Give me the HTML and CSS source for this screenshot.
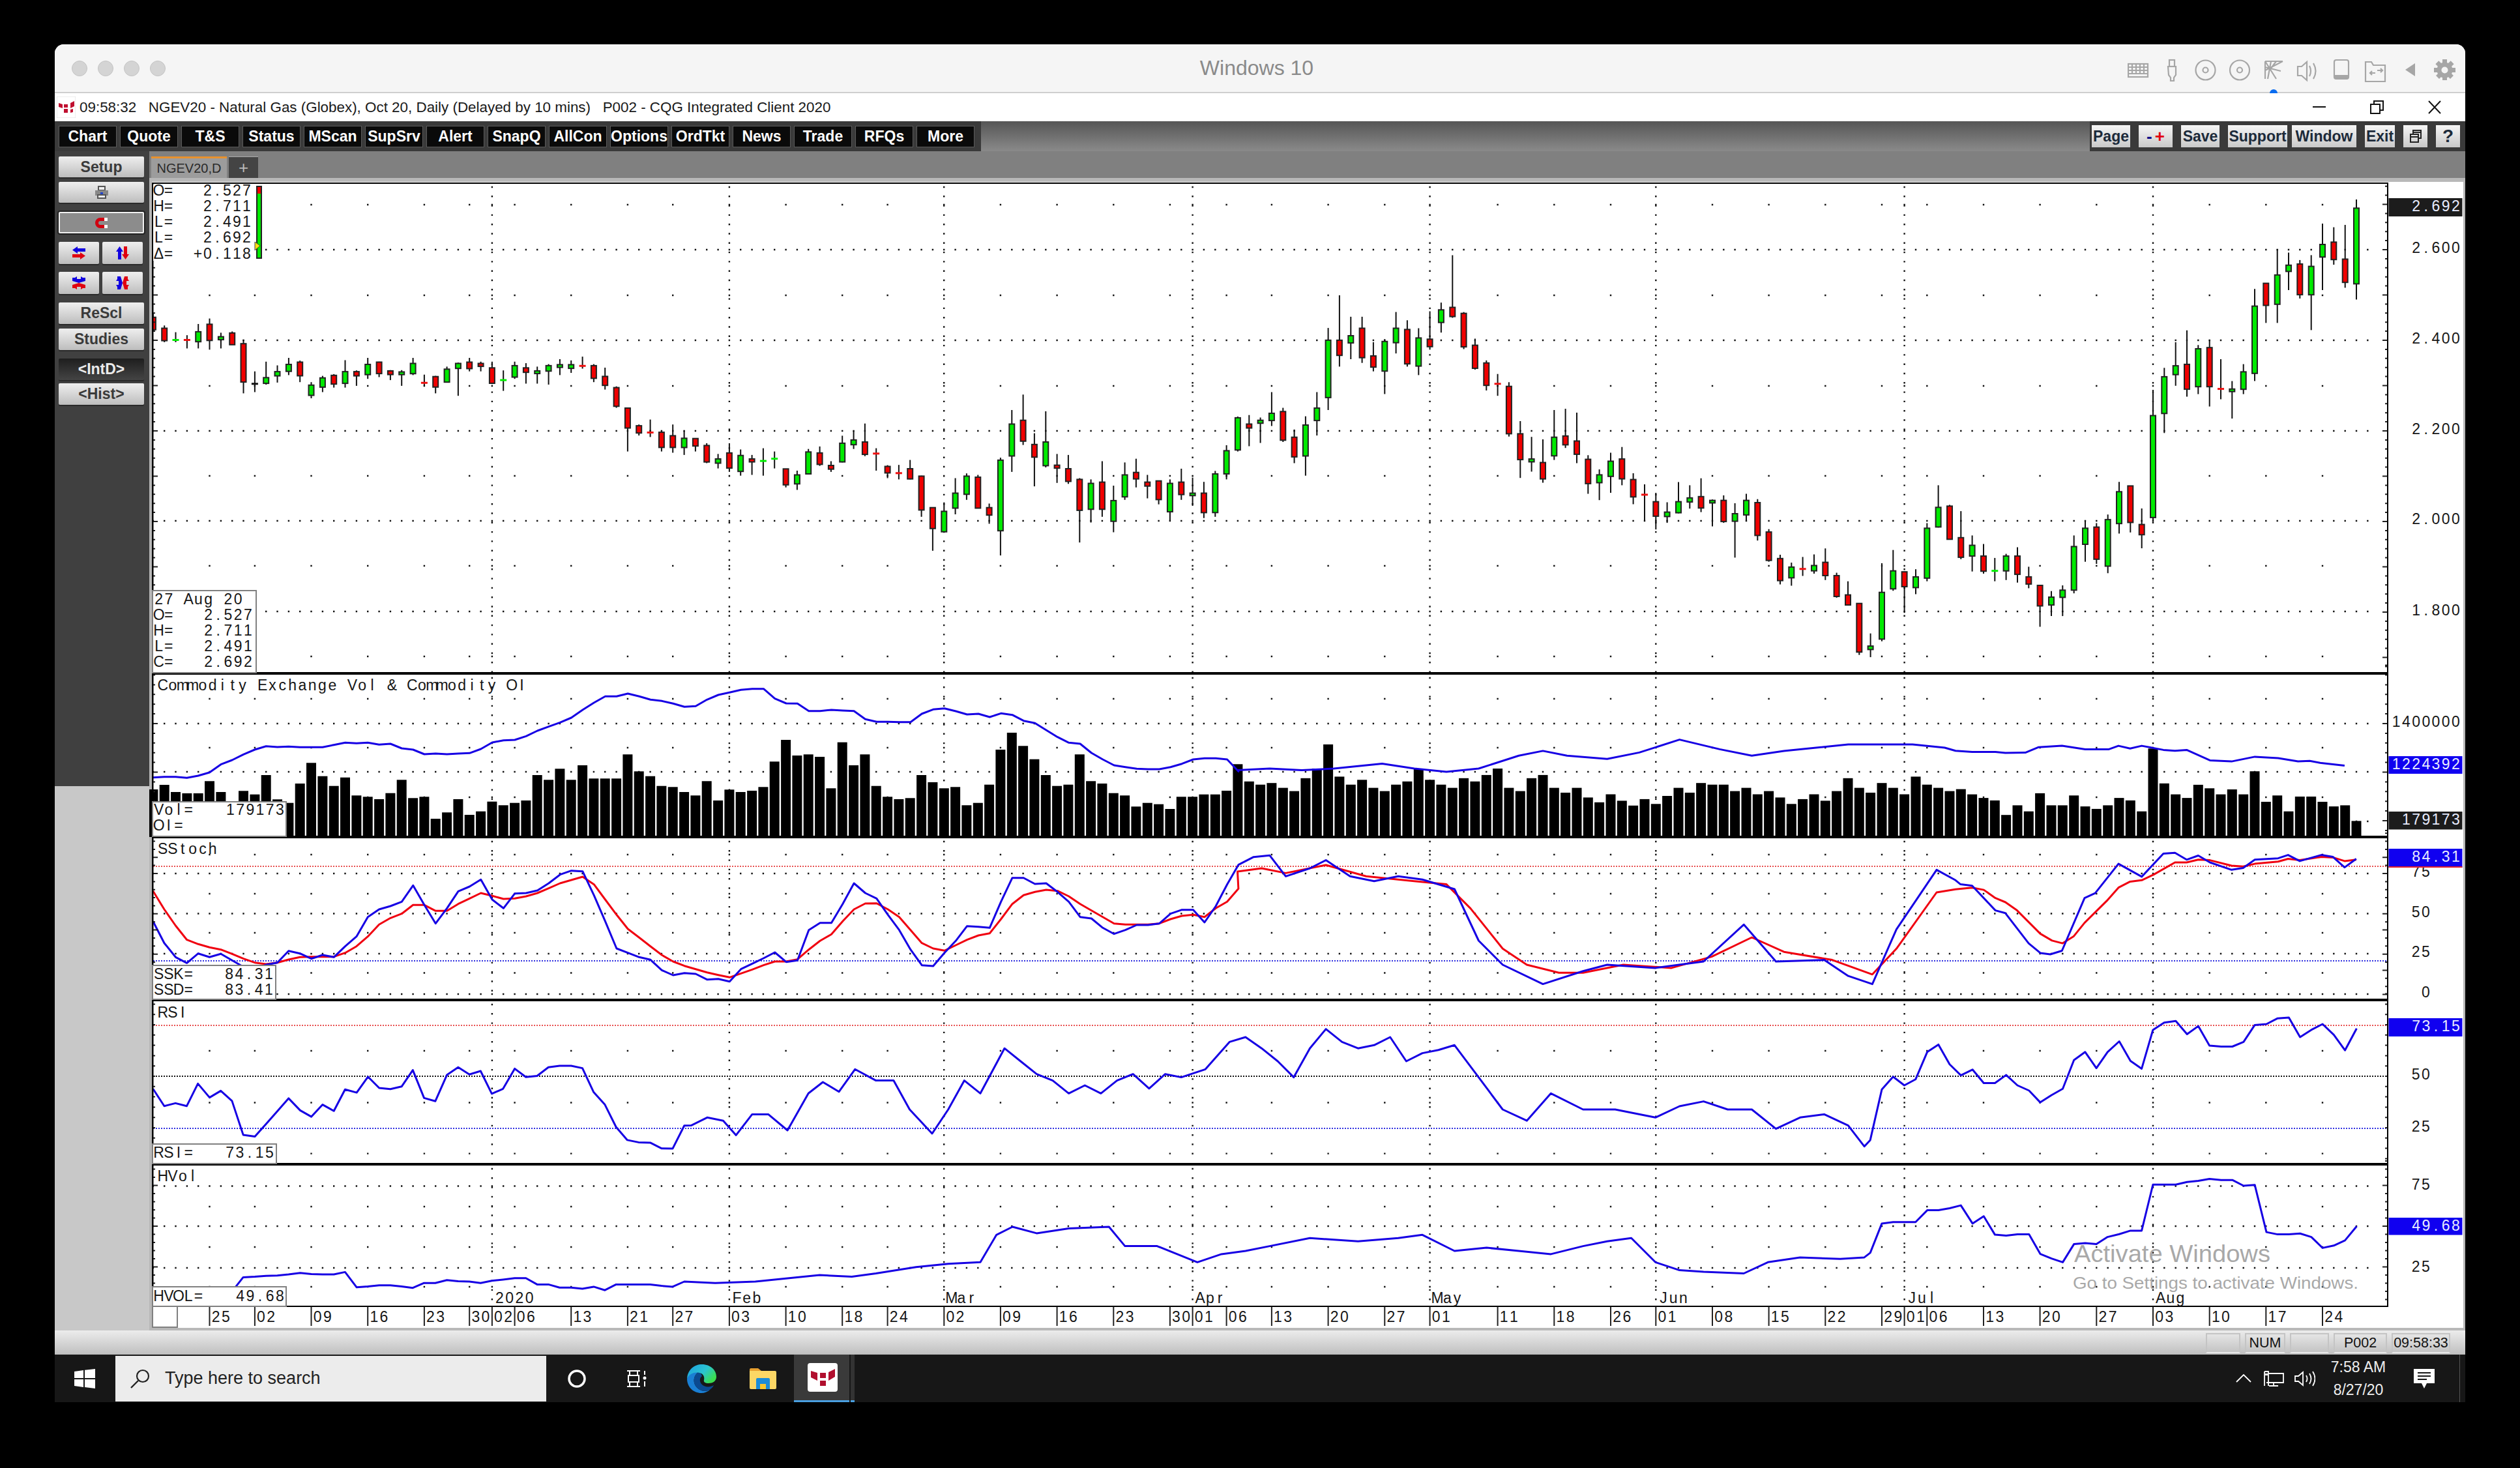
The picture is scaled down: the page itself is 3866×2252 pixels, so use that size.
FILE: index.html
```html
<!DOCTYPE html>
<html lang="en">
<head>
<meta charset="utf-8">
<title>Windows 10 - CQG Integrated Client</title>
<link rel="stylesheet" href="styles.css">
</head>
<body>
<div class="window">
  <header class="titlebar">
    <div class="lights"><span class="light"></span><span class="light"></span><span class="light"></span><span class="light"></span></div>
    <div class="vm-name">Windows 10</div>
    <svg class="vm-icons" viewBox="3264 88 503 55" width="503" height="55">
      <g class="vi">
        <rect x="3265" y="98" width="30" height="20"/>
        <path d="M3265 103h30M3265 108h30M3265 113h30M3271 98v15M3277 98v15M3283 98v15M3289 98v15"/>
        <rect x="3328" y="92" width="8" height="10"/>
        <path d="M3326 102h12v13l-3 4v5h-5v-5l-3-4z"/>
        <circle cx="3383.500" cy="107.500" r="15"/><circle cx="3383.500" cy="107.500" r="4"/>
        <circle cx="3436" cy="107.500" r="15"/><circle cx="3436" cy="107.500" r="4"/>
        <path d="M3475 94v27M3475 94h27M3475 94l17 27M3475 108l27-14M3484 94l-5 27M3475 103l24 6M3492 94l-9 12"/>
        <path d="M3525 102h6l8-7v28l-8-7h-6zM3543 101q4 8 0 16M3549 97q7 12 0 24"/>
        <rect x="3581" y="92" width="22" height="29" rx="3"/>
        <path d="M3629 95h9l3 5h18v25h-30zM3639 115l-3-3 3-3m-3 3h8M3652 105l3 3-3 3m3-3h-8"/>
      </g>
      <rect class="vf" x="3582" y="115" width="20" height="6"/>
      <polygon class="vf" points="3705,97 3705,117 3690,107"/>
      <g class="vf">
        <rect x="3747" y="91" width="7" height="32"/><rect x="3734" y="104" width="33" height="7"/>
        <rect x="3747" y="91" width="7" height="32" transform="rotate(45 3750.500 107.500)"/>
        <rect x="3747" y="91" width="7" height="32" transform="rotate(-45 3750.500 107.500)"/>
      </g>
      <circle class="vg" cx="3750.500" cy="107.500" r="12"/>
      <circle class="vh" cx="3750.500" cy="107.500" r="5"/>
      <circle class="vb" cx="3488" cy="143" r="6"/>
    </svg>
  </header>

  <div class="apptitle">
    <svg class="appicon" viewBox="0 0 29 33" width="29" height="33">
      <rect width="29" height="33" fill="#fff" stroke="#ddd"/>
      <path fill="#c01030" d="M3 10l6 2v6l-6-2zM21 10l6-3v8l-6 3zM11 12h6v5h-6zM11 19h6v6h-6zM21 20l4-1v5l-4 1z"/>
    </svg>
    <span class="apptext">09:58:32   NGEV20 - Natural Gas (Globex), Oct 20, Daily (Delayed by 10 mins)   P002 - CQG Integrated Client 2020</span>
    <svg class="winctl" viewBox="3548 150 197 30" width="197" height="30">
      <path d="M3548 164h20" stroke="#111" stroke-width="2" fill="none"/>
      <path d="M3637 160h14v14h-14zM3642 160v-5h14v14h-5" stroke="#111" stroke-width="2" fill="none"/>
      <path d="M3726 155l18 19M3744 155l-18 19" stroke="#111" stroke-width="2" fill="none"/>
    </svg>
  </div>

  <nav class="toolbar">
    <div class="tbl">
      <span class="tb">Chart</span><span class="tb">Quote</span><span class="tb">T&amp;S</span><span class="tb">Status</span><span class="tb">MScan</span><span class="tb">SupSrv</span><span class="tb">Alert</span><span class="tb">SnapQ</span><span class="tb">AllCon</span><span class="tb">Options</span><span class="tb">OrdTkt</span><span class="tb">News</span><span class="tb">Trade</span><span class="tb">RFQs</span><span class="tb">More</span>
    </div>
    <div class="tbr">
      <span class="rb">Page</span>
      <span class="rb pm"><i class="minus">-</i><i class="plus">+</i></span>
      <span class="rb">Save</span>
      <span class="rb">Support</span>
      <span class="rb win">Window</span>
      <span class="rb">Exit</span>
      <span class="rb"><svg viewBox="0 0 18 20" width="18" height="20"><path d="M1 7h12v12H1zM1 11h12M5 7V1h12v12h-4M5 4h12" fill="none" stroke="#222" stroke-width="2"/></svg></span>
      <span class="rb q">?</span>
    </div>
  </nav>

  <div class="content">
    <aside class="sidebar">
      <span class="sb h32">Setup</span>
      <span class="sb g7 h32">
        <svg viewBox="0 0 22 20" width="22" height="20"><path d="M6 1h10v6H6z" fill="#eee" stroke="#555" stroke-width="2"/><rect x="1" y="7" width="20" height="8" fill="#888"/><rect x="5" y="14" width="12" height="5" fill="#eee" stroke="#555" stroke-width="2"/><rect x="9" y="10" width="4" height="3" fill="#2244cc"/></svg>
      </span>
      <span class="sb sunk g14">
        <svg viewBox="0 0 22 20" width="22" height="20"><path d="M20 2H9a8 8 0 0 0 0 16h11v-5H9a3 3 0 0 1 0-6h11z" fill="#d00010"/><rect x="15" y="2" width="5" height="5" fill="#fff"/><rect x="15" y="13" width="5" height="5" fill="#fff"/></svg>
      </span>
      <div class="sbrow g13">
        <span class="sb small"><svg viewBox="0 0 22 22" width="22" height="22"><path d="M9 1v3h12v5H9v3L1 6.500z" fill="#1000e0"/><path d="M13 10v3H1v5h12v3l8-5.500z" fill="#e00010"/></svg></span>
        <span class="sb small"><svg viewBox="0 0 22 22" width="22" height="22"><path d="M1 9h3v12h5V9h3L6.500 1z" fill="#1000e0"/><path d="M10 13h3V1h5v12h3l-5.500 8z" fill="#e00010"/></svg></span>
      </div>
      <div class="sbrow g12">
        <span class="sb small"><svg viewBox="0 0 22 22" width="22" height="22"><path d="M1 3h4l3-2v4h6V1l3 2h4v5l-10 3L1 8z" fill="#1000e0"/><path d="M1 19h4l3 2v-4h6v4l3-2h4v-5l-10-3L1 14z" fill="#e00010"/></svg></span>
        <span class="sb small"><svg viewBox="0 0 22 22" width="22" height="22"><path d="M3 1v4L1 8h4v6H1l2 3v4h5l3-10L8 1z" fill="#1000e0"/><path d="M19 1v4l2 3h-4v6h4l-2 3v4h-5l-3-10 3-10z" fill="#e00010"/></svg></span>
      </div>
      <span class="sb g13">ReScl</span>
      <span class="sb g7">Studies</span>
      <span class="sb on g13">&lt;IntD&gt;</span>
      <span class="sb g5">&lt;Hist&gt;</span>
    </aside>

    <section class="main">
      <div class="tabs">
        <span class="tab">NGEV20,D</span>
        <span class="tabplus">+</span>
      </div>
      <svg id="chart" class="chart" viewBox="229 273 3553 1768" width="3553" height="1768" role="img" aria-label="NGEV20 daily candlestick chart"></svg>
    </section>
  </div>

  <footer class="statusbar">
    <div class="cells">
      <span class="cell"></span><span class="cell">NUM</span><span class="cell"></span><span class="cell">P002</span><span class="cell">09:58:33</span>
    </div>
  </footer>

  <div class="taskbar">
    <svg class="t-win" viewBox="0 0 32 30" width="32" height="30"><path fill="#fff" d="M0 4l14-2v12H0zM16 1.700L32 0v14H16zM0 16h14v12L0 26zM16 16h16v14l-16-2z"/></svg>
    <div class="search">
      <svg viewBox="0 0 32 30" width="32" height="30"><circle cx="20" cy="11" r="9" fill="none" stroke="#222" stroke-width="2.200"/><path d="M13 18L2 29" stroke="#222" stroke-width="2.400"/></svg>
      <span>Type here to search</span>
    </div>
    <svg class="t-cort" viewBox="0 0 28 28" width="28" height="28"><circle cx="14" cy="14" r="12" fill="none" stroke="#fff" stroke-width="3.500"/></svg>
    <svg class="t-view" viewBox="0 0 30 28" width="30" height="28"><path d="M0 2h20M0 26h20M2 9h16v10H2zM4 9V2M16 9V2M4 19v7M16 19v7" stroke="#fff" stroke-width="2" fill="none"/><circle cx="27" cy="13" r="2.500" fill="#fff"/><path d="M27 2v6M27 18v8" stroke="#fff" stroke-width="2"/></svg>
    <svg class="t-edge" viewBox="0 0 46 44" width="46" height="44">
      <defs><linearGradient id="eg" x1="0" y1="0" x2="1" y2="0.600"><stop offset="0" stop-color="#1b9de2"/><stop offset="0.600" stop-color="#2bc4d0"/><stop offset="1" stop-color="#3bde4e"/></linearGradient></defs>
      <path fill="#1a7fd4" d="M1 22C4 14 12 11 18 12c-6 5-8 12-5 19 4 9 16 13 24 7-4 4-9 6-14 6C10 44 1 34 1 22z"/>
      <path fill="#0b4a91" d="M18 12c-6 5-8 12-5 19 4 9 16 13 24 7 3-2 4-4 5-6-6 4-15 3-19-2-3-4-3-9 1-12-1-4-3-6-6-6z"/>
      <path fill="url(#eg)" d="M1 22C2 8 12 0 24 0c13 0 22 9 22 19 0 7-6 10-12 10-5 0-8-2-7-5 1-3 0-10-7-11C10 11 4 16 1 22z"/>
    </svg>
    <svg class="t-folder" viewBox="0 0 41 32" width="41" height="32">
      <path fill="#e8a030" d="M0 2q0-2 2-2h11l5 4h-18z"/>
      <path fill="#fcd765" d="M0 4h39q2 0 2 2v24q0 2-2 2H2q-2 0-2-2z"/>
      <path fill="#1a8cd8" d="M10 32V17q0-2 2-2h17q2 0 2 2v15h-6v-8H16v8z"/>
      <rect x="16" y="24" width="9" height="8" fill="#f7c830"/>
    </svg>
    <div class="t-active">
      <svg viewBox="0 0 46 44" width="46" height="44"><rect width="46" height="44" rx="4" fill="#fff"/><path fill="#b10f2e" d="M5 12l10 3v12l-10-5zM32 14l10-5v12l-10 6zM19 15h9v8h-9zM19 27h9v8h-9z"/></svg>
    </div>
    <span class="t-sliver"></span>
    <div class="tray">
      <svg viewBox="0 0 24 13" width="24" height="13"><path d="M1 12L12 1l11 11" fill="none" stroke="#fff" stroke-width="1.800"/></svg>
      <svg class="tr-net" viewBox="0 0 31 24" width="31" height="24"><path d="M7 4h23v14H4M15 18v5M8 23h14M1 1h6v22M1 1v22" fill="none" stroke="#fff" stroke-width="1.800"/><rect x="2" y="4" width="4" height="3" fill="#fff"/></svg>
      <svg class="tr-vol" viewBox="0 0 32 24" width="32" height="24"><path d="M1 8h5l7-6v20l-7-6H1zM18 7q3 5 0 10M23 4q5 8 0 16M28 1q7 11 0 22" fill="none" stroke="#fff" stroke-width="1.800"/></svg>
      <div class="clock"><span>7:58 AM</span><span>8/27/20</span></div>
      <svg class="tr-act" viewBox="0 0 32 30" width="32" height="30"><path fill="#fff" d="M0 0h32v22H20l-4 8-4-8H0z"/><path d="M6 6h20M6 11h20M6 16h14" stroke="#171717" stroke-width="2"/></svg>
    </div>
  </div>
</div>
<script src="chart.js"></script>
</body>
</html>
```

FILE: styles.css
```css
* { box-sizing: border-box; }
html, body { margin: 0; height: 2252px; background: #000; overflow: hidden; }
body { font-family: "Liberation Sans", Arial, sans-serif; }

.window { margin: 68px 0 0 84px; width: 3698px; height: 2083px; display: flex; flex-direction: column; border-radius: 14px 14px 0 0; overflow: hidden; background: #fff; }

.titlebar { height: 75px; flex: none; background: #f5f5f5; border-bottom: 2px solid #cfcfcf; display: grid; grid-template-columns: 1fr auto 1fr; }
.lights { display: flex; gap: 16px; padding: 25px 0 0 26px; }
.light { width: 24px; height: 24px; border-radius: 50%; background: #d4d4d4; border: 1px solid #c4c4c4; }
.vm-name { font-size: 32px; color: #8a8a8a; padding-top: 18px; margin-right: 10px; }
.vm-icons { justify-self: end; margin: 20px 15px 0 0; display: block; }
.vi { fill: none; stroke: #a6a6a6; stroke-width: 2.2; }
.vf { fill: #a6a6a6; }
.vg { fill: #a6a6a6; }
.vh { fill: #f5f5f5; }
.vb { fill: #0a6cf0; }

.apptitle { height: 43px; flex: none; display: flex; align-items: center; background: #fff; padding-left: 3px; }
.appicon { flex: none; }
.apptext { font-size: 22.4px; white-space: pre; color: #1a1a1a; margin-left: 6px; }
.winctl { margin-left: auto; margin-right: 37px; flex: none; }

.toolbar { height: 46px; flex: none; display: flex; justify-content: space-between; background: linear-gradient(#565656, #8a8a8a); }
.tbl { display: flex; gap: 5px; padding: 7px 6px 0; background: #3a3a3a; width: 1421px; }
.tb { width: 89px; height: 33px; background: #0a0a0a; border: 1px solid #5a5a5a; color: #fff; font-weight: 700; font-size: 23px; display: flex; align-items: center; justify-content: center; }
.tbr { display: grid; grid-template-columns: 59px 52px 59px 91px 93px 46px 37px 37px; column-gap: 13px; padding: 6px 8px 0 0; background: #3a3a3a; width: 576px; justify-content: end; }
.rb { height: 34px; background: linear-gradient(#f6f6f6, #c9c9c9); color: #1c2a3a; font-weight: 700; font-size: 23px; display: flex; align-items: center; justify-content: center; overflow: hidden; white-space: nowrap; }
.rb.win { margin-left: -6px; }
.rb.q { font-size: 28px; }
.pm i { font-style: normal; font-weight: 900; font-size: 26px; padding: 0 2px; }
.minus { color: #10108a; }
.plus { color: #e00010; }

.content { flex: 1; min-height: 0; display: flex; }
.sidebar { width: 145px; flex: none; padding: 8px 0 0 6px; display: flex; flex-direction: column; background: linear-gradient(#404040 0, #404040 974px, #c8c8c8 974px); }
.sb { width: 131px; height: 33px; flex: none; background: linear-gradient(#efefef, #bdbdbd); box-shadow: 0 2px 0 #2a2a2a; color: #3a3a3a; font-weight: 700; font-size: 23px; display: flex; align-items: center; justify-content: center; border-radius: 2px; }
.h32 { height: 32px; }
.sunk { height: 33px; background: #8c8c8c; border: 2px solid #f0f0f0; box-shadow: 0 0 0 2px #222; }
.on { background: linear-gradient(#1e1e1e, #444); color: #eaeaea; }
.small { width: 62px; height: 34px; }
.sbrow { display: flex; gap: 5px; flex: none; }
.g5 { margin-top: 5px; }
.g7 { margin-top: 7px; }
.g12 { margin-top: 12px; }
.g13 { margin-top: 13px; }
.g14 { margin-top: 14px; }

.main { flex: 1; min-width: 0; display: flex; flex-direction: column; }
.tabs { height: 41px; flex: none; background: #808080; display: flex; align-items: flex-end; gap: 3px; padding-left: 3px; }
.tab { width: 116px; height: 33px; background: #9c9c9c; border-top: 3px solid #e8922e; color: #2a2a2a; font-size: 20px; display: flex; align-items: center; justify-content: center; }
.tabplus { width: 45px; height: 33px; background: #444; border-top: 1px solid #aaa; color: #bbb; font-size: 26px; display: flex; align-items: center; justify-content: center; }
.chart { display: block; background: #b8b8b8; }

.statusbar { height: 37px; flex: none; background: linear-gradient(#ececec, #bfbfbf); display: flex; justify-content: flex-end; padding: 4px 23px 0 0; }
.cells { display: grid; grid-template-columns: 53px 62px 60px 82px 90px; column-gap: 7px; }
.cell { height: 31px; border: 2px solid #c4c4c4; border-bottom-color: #e8e8e8; font-size: 21.5px; color: #111; display: flex; align-items: center; justify-content: center; white-space: nowrap; overflow: hidden; }

.taskbar { height: 73px; flex: none; background: #171717; display: flex; align-items: center; color: #fff; }
.t-win { margin-left: 30px; flex: none; }
.search { margin-left: 31px; width: 661px; height: 70px; background: #ececec; color: #222; display: flex; align-items: center; font-size: 27px; padding-left: 22px; gap: 22px; flex: none; }
.t-cort { margin-left: 33px; flex: none; }
.t-view { margin-left: 63px; flex: none; }
.t-edge { margin-left: 61px; flex: none; }
.t-folder { margin-left: 51px; flex: none; }
.t-active { margin-left: 27px; width: 85px; height: 73px; background: #3a3a3a; border-bottom: 3px solid #4a9fe0; display: flex; align-items: center; justify-content: center; flex: none; padding-left: 2px; }
.t-sliver { margin-left: 2px; width: 6px; height: 73px; background: #333; border-bottom: 3px solid #4a9fe0; flex: none; }
.tray { margin-left: auto; display: flex; align-items: center; height: 73px; padding-right: 38px; border-right: 1px solid #555; margin-right: 8px; }
.tr-net { margin-left: 19px; }
.tr-vol { margin-left: 16px; }
.clock { margin-left: 24px; width: 84px; display: flex; flex-direction: column; align-items: center; font-size: 23px; line-height: 35px; white-space: nowrap; color: #eee; }
.tr-act { margin-left: 43px; }

/* chart */
.t { font: 23px "Liberation Sans", Arial, sans-serif; fill: #161616; white-space: pre; text-anchor: middle; }
.t.chip { fill: #e8ecff; }
.wm1 { font: 36px "Liberation Sans", Arial, sans-serif; fill: #9a9a9a; opacity: .85; }
.wm2 { font: 25px "Liberation Sans", Arial, sans-serif; fill: #9a9a9a; opacity: .85; }
.plotbg { fill: #fff; }
.dots { fill: #111; }
.box { fill: #fff; stroke: #808080; stroke-width: 2; }
.sep { fill: #000; }
.line { fill: none; stroke-width: 3; stroke-linejoin: round; }
.blue { stroke: #1600e4; }
.red { stroke: #f00010; }
.wick { stroke: #111; stroke-width: 2; }
.body { stroke: #222; stroke-width: 2; }
.gfill { fill: #00ea00; }
.rfill { fill: #f00000; }
.kfill { fill: #111; }
.bgfill { fill: #00f000; }
.brfill { fill: #f01010; }
.vbar { fill: #000; }
.hl { fill: none; stroke-width: 2; stroke-dasharray: 2 2; }
.hl-r { stroke: #e85050; }
.hl-b { stroke: #3030e0; }
.hl-k { stroke: #111; }
.chipk { fill: #1c1c1c; }
.chipb { fill: #1000f0; }
.chipr { fill: #e02030; }
.marker { fill: #ffe010; stroke: #444; stroke-width: 1; }
```

FILE: chart.js
```js
(function () {
  var X0 = 3615, DX = 17.334;
  var L = 234, R = 3663, T = 281;
  function bx(k) { return X0 - k * DX; }
  function kOf(px) { return Math.round((X0 - px) / DX); }

  /* candles: zoomX colour hi top bottom lo — read from crops of the source */
  var segA = "8 r 525 540 590 595;35 r 573 584 634 640;62 G 600 627 635 640;89 R 612 627 635 665;117 g 567 598 638 665;144 r 545 568 633 670;171 g 602 618 630 665;198 r 597 603 650 650;225 r 630 646 800 845;252 K 757 805 809 840;280 g 718 782 805 810;307 g 733 758 775 802;334 g 703 729 757 772;361 r 714 720 775 800;388 g 800 812 853 865;415 g 775 783 820 840;443 r 768 773 808 822;470 g 712 758 805 822;497 r 753 758 775 815;524 g 703 729 770 787;552 r 718 720 766 780;579 r 752 755 770 792;606 g 752 759 770 815;633 g 703 725 766 772;660 R 770 800 806 815;688 r 775 778 820 845;715 g 738 748 800 800;742 g 722 725 745 855;769 r 703 720 746 757;796 r 718 725 737 757;823 r 718 743 805 808;850 G 753 788 796 835;878 g 718 734 780 787;905 r 724 743 761 806;932 g 738 755 766 806;959 g 728 734 756 810;986 g 708 730 741 772;1014 g 713 730 745 763;1041 R 698 733 737 746;1068 r 728 734 785 800;1095 r 742 777 813 830;1122 r 817 822 897 903;1149 r 903 904 984 1078;1176 r 970 975 1004 1014;1204 R 950 1000 1004 1020;1231 r 998 1001 1062 1078;1258 r 970 1015 1062 1083;1285 g 995 1025 1062 1092;1312 r 1025 1026 1056 1078;1340 r 1045 1054 1120 1125;1367 g 1088 1108 1125 1146;1394 r 1045 1084 1145 1160;1421 g 1070 1094 1158 1175;1448 r 1092 1108 1120 1172;1475 G 1065 1112 1120 1175;1503 G 1078 1103 1111 1146;1530 r 1147 1148 1212 1222;1557 g 1155 1172 1208 1232";
  var segB = "63 g 1068 1080 1168 1170;90 r 1058 1084 1130 1136;117 r 1117 1134 1149 1160;145 g 1015 1045 1120 1122;172 g 996 1032 1051 1068;199 r 966 1040 1090 1097;226 R 1065 1083 1090 1155;254 r 1133 1138 1164 1185;281 R 1132 1160 1170 1190;308 r 1112 1147 1188 1190;335 r 1175 1177 1313 1340;362 r 1302 1303 1387 1476;390 g 1282 1318 1400 1402;417 g 1185 1245 1305 1330;444 g 1166 1177 1250 1272;471 r 1172 1181 1305 1306;498 r 1287 1303 1333 1368;525 g 1103 1113 1396 1495;553 g 912 968 1096 1160;580 r 850 953 1037 1052;607 r 1005 1050 1101 1218;634 g 917 1040 1135 1142;661 r 1088 1133 1145 1204;688 r 1092 1147 1198 1208;716 r 1185 1190 1314 1443;743 g 1190 1206 1310 1363;770 r 1117 1201 1310 1340;797 g 1215 1275 1358 1402;825 g 1122 1172 1260 1272;852 r 1107 1162 1188 1222;879 r 1172 1201 1217 1266;906 r 1195 1196 1271 1290;933 g 1190 1206 1320 1358;960 r 1147 1201 1251 1272;988 g 1183 1245 1255 1296;1015 r 1200 1245 1323 1345;1042 g 1156 1168 1323 1340;1069 g 1053 1075 1168 1190;1096 g 938 943 1072 1078;1124 r 932 968 984 1057;1151 g 942 953 965 1044;1178 g 840 925 954 976;1205 r 903 918 1033 1040;1232 r 990 1021 1100 1125;1259 g 937 972 1096 1175;1287 g 840 904 954 1014;1314 g 583 632 862 912;1341 r 452 632 693 738;1368 g 538 614 643 708;1395 r 538 584 702 723;1423 r 640 695 740 757;1450 g 628 637 756 848;1477 g 519 584 642 685;1504 r 552 589 727 738;1531 g 584 623 736 772;1558 r 516 628 658 670";
  var segC = "17 g 380 403 443 475;45 r 230 395 424 428;72 r 410 414 520 527;99 r 494 515 588 592;126 r 563 571 642 658;153 R 606 635 639 675;181 r 632 645 795 804;208 r 755 795 877 935;235 g 805 875 884 915;262 r 813 886 938 950;290 g 720 806 865 878;317 r 716 802 830 840;344 r 728 818 860 888;371 r 863 876 953 985;398 g 908 925 950 1005;425 g 855 882 930 982;452 r 837 875 938 958;480 r 920 940 995 1018;507 R 955 985 991 1073;534 r 982 1010 1056 1098;561 g 1012 1043 1057 1077;588 g 948 1010 1045 1047;615 g 958 998 1011 1032;643 r 936 994 1030 1043;670 g 1003 1006 1014 1088;697 r 990 1006 1073 1077;724 g 1015 1048 1072 1187;751 g 985 1006 1052 1073;778 r 1002 1013 1117 1133;806 r 1097 1106 1196 1200;833 r 1178 1190 1260 1272;860 g 1203 1217 1251 1276;887 R 1185 1220 1226 1245;914 g 1177 1212 1229 1238;942 r 1158 1202 1244 1258;969 r 1235 1244 1310 1314;996 r 1262 1305 1337 1338;1023 r 1331 1332 1486 1495;1050 g 1427 1467 1478 1502;1078 g 1205 1297 1445 1452;1105 g 1163 1229 1286 1292;1132 r 1231 1232 1279 1362;1159 g 1224 1248 1282 1303;1186 g 1078 1094 1252 1262;1213 g 958 1028 1090 1092;1241 r 1020 1024 1129 1130;1268 r 1040 1124 1186 1192;1295 g 1117 1148 1182 1231;1322 r 1144 1182 1230 1238;1349 G 1188 1227 1231 1262;1377 g 1175 1182 1229 1258;1404 r 1154 1182 1240 1266;1431 r 1216 1248 1271 1284;1458 r 1274 1275 1340 1406;1485 g 1293 1312 1337 1372;1512 g 1275 1290 1313 1372;1540 g 1117 1152 1290 1300;1567 g 1070 1094 1145 1200";
  var segD = "110 r 1435 1452 1590 1610;162 g 1398 1420 1620 1650;214 g 1258 1300 1437 1480;266 r 1275 1275 1432 1475;318 r 1372 1441 1485 1543;370 g 862 973 1411 1427;422 g 768 806 964 1048;474 g 658 759 797 845;526 r 607 753 860 892;578 g 670 686 849 881;630 r 648 681 849 934;682 R 731 856 861 903;734 g 825 859 870 986;786 g 752 785 860 881;838 g 429 503 792 825;890 r 405 405 500 575;942 g 258 369 495 575;994 g 273 327 354 434;1046 r 305 322 454 470;1098 g 284 332 454 606;1150 g 148 238 292 434;1202 r 164 228 303 325;1254 r 154 301 401 424;1306 g 45 82 407 475";

  var out = [];
  function rect(x, y, w, h, c) { out.push('<rect class="' + c + '" x="' + x.toFixed(1) + '" y="' + y.toFixed(1) + '" width="' + w.toFixed(1) + '" height="' + h.toFixed(1) + '"/>'); }

  /* text drawn glyph by glyph in fixed cells, like the terminal's chart font */
  function cells(str, x, y, cls, cell) {
    cell = cell || 15.2;
    var xs = [];
    for (var i = 0; i < str.length; i++) xs.push((x + cell * (i + 0.5)).toFixed(1));
    var s = str.replace(/&/g, '&amp;');
    out.push('<text class="t' + (cls ? ' ' + cls : '') + '" x="' + xs.join(' ') + '" y="' + y + '">' + s + '</text>');
  }
  function cellsR(str, xEnd, y, cls, cell) { cells(str, xEnd - str.length * (cell || 15.2), y, cls, cell); }

  /* ---- background ---- */
  rect(233, 279, 3546, 1758, 'plotbg');

  var DATES = [[190,'25'],[186,'02'],[181,'09'],[176,'16'],[171,'23'],[167,'30'],[165,'02'],[163,'06'],[158,'13'],[153,'21'],[149,'27'],[144,'03'],[139,'10'],[134,'18'],[130,'24'],[125,'02'],[120,'09'],[115,'16'],[110,'23'],[105,'30'],[103,'01'],[100,'06'],[96,'13'],[91,'20'],[86,'27'],[82,'01'],[76,'11'],[71,'18'],[66,'26'],[62,'01'],[57,'08'],[52,'15'],[47,'22'],[42,'29'],[40,'01'],[38,'06'],[33,'13'],[28,'20'],[23,'27'],[18,'03'],[13,'10'],[8,'17'],[3,'24']];
  var MONTHS = [[165,'2020'],[144,'Feb'],[125,'Mar'],[103,'Apr'],[82,'May'],[62,'Jun'],[40,'Jul'],[18,'Aug']];
  var PANES = [
    { top: 282, bot: 1031, dense: [383, 522, 661, 799, 938], sparse: [314, 453, 592, 730, 868, 1007], sub: 13.9, ref: 383 },
    { top: 1035, bot: 1282, dense: [1110, 1184, 1260], sparse: [1072, 1147, 1223], sub: 14.9, ref: 1110 },
    { top: 1286, bot: 1532, dense: [1340, 1401.5, 1463, 1525], sparse: [1311, 1371, 1431, 1492.5], sub: 12.37, ref: 1340 },
    { top: 1536, bot: 1784, dense: [], sparse: [1612, 1691.5, 1769.6], sub: 15.8, ref: 1651 },
    { top: 1788, bot: 2003, dense: [1819.5, 1881, 1945], sparse: [1851, 1913, 1974], sub: 12.5, ref: 1881 }
  ];

  /* ---- grid dots ---- */
  var d = '';
  function dot(x, y) { d += 'M' + x.toFixed(1) + ' ' + (y - 1.2).toFixed(1) + 'h2.4v2.4h-2.4z'; }
  PANES.forEach(function (p) {
    var k, y;
    p.dense.forEach(function (y) { for (k = 195; k >= -1; k--) dot(bx(k) - 1.2, y); });
    p.sparse.forEach(function (y) { DATES.forEach(function (dt) { dot(bx(dt[0]) - 1.2, y); }); });
    MONTHS.forEach(function (m) {
      for (y = p.top + 5; y < p.bot; y += 14.3) dot(bx(m[0]) - 1.2, y);
    });
  });
  out.push('<path class="dots" d="' + d + '"/>');

  /* ---- threshold lines ---- */
  [[1329, 'hl-r'], [1474, 'hl-b'], [1573, 'hl-r'], [1651, 'hl-k'], [1731, 'hl-b']].forEach(function (h) {
    out.push('<path class="hl ' + h[1] + '" d="M235 ' + h[0] + 'H3663"/>');
  });

  /* ---- candles ---- */
  out.push('<clipPath id="plotclip"><rect x="' + L + '" y="' + T + '" width="' + (R - L) + '" height="750"/></clipPath><g clip-path="url(#plotclip)">');
  function candles(seg, fx, fy) {
    seg.split(';').forEach(function (row) {
      var c = row.split(' ');
      var x = bx(kOf(fx(+c[0]))), col = c[1];
      var hi = fy(+c[2]), top = fy(+c[3]), bot = fy(+c[4]), lo = fy(+c[5]);
      out.push('<path class="wick" d="M' + x.toFixed(1) + ' ' + hi.toFixed(1) + 'V' + lo.toFixed(1) + '"/>');
      if (col === col.toUpperCase()) {
        rect(x - 5, (top + bot) / 2 - 1.5, 10, 3, col === 'G' ? 'bgfill' : col === 'R' ? 'brfill' : 'kfill');
      } else {
        out.push('<rect class="body ' + (col === 'g' ? 'gfill' : 'rfill') + '" x="' + (x - 4).toFixed(1) + '" y="' + top.toFixed(1) + '" width="8" height="' + (bot - top).toFixed(1) + '"/>');
      }
    });
  }
  function fxA(x) { return 230 + x / 1.568; }
  function fyA(y) { return 280 + y / 2.613; }
  candles(segA, fxA, fyA);
  candles(segB, function (x) { return 1200 + x / 1.568; }, fyA);
  candles(segC, function (x) { return 2200 + x / 1.568; }, function (y) { return 280 + y / 2.063; });
  candles(segD, function (x) { return 3180 + x / 3; }, function (y) { return 290 + y / 2.8; });
  out.push('</g>');

  /* ---- volume bars ---- */
  var volA = [513,492,525,531,531,475,525,null,520,536,447,559,575,486,391,452,497,458,541,547,558,530,469,553,547,648,619,558,630,614,569,586,575,564,447,469,418,469,402,463,463,463,352,430,452,497,502,525,541,475,564,514,525,519,502,385,285,357,352,363,508,296,402,352,497,547,558,553,447,480,508,502,586,575,491,330,252,313,374,447,497,491,352,475,486,530,541,592,575,581,603,547,547,536,536,519,397];
  var volB = [486,488,487,490,492,484,478,463,483,488,485,490,492,488,486,478,485,488,490,484,486,482,478,490,492,484,482,490,493,490,496,499,494,498,501,497,500,495,490,493,487,488,488,492,490,494,492,496,500,497,494,498,492,484,490,493,487,490,494,483,488,490,492];
  var volC = [738,757,770,779,832,797,819,753,797,797,761,801,810,797,770,779,819,590,717,757,770,722,735,757,739,757,673,784,761,819,765,765,784,801,797,854];
  volA.forEach(function (v, i) { if (v !== null) { var top = 1040 + v / 3; rect(bx(195 - i) - 7.5, top, 15, 1284 - top, 'vbar'); } });
  volB.forEach(function (v, i) { var top = v * 2.4666; rect(bx(98 - i) - 7.5, top, 15, 1284 - top, 'vbar'); });
  volC.forEach(function (v, i) { var top = 900 + v / 2.376; rect(bx(35 - i) - 7.5, top, 15, 1284 - top, 'vbar'); });

  /* ---- indicator lines ---- */
  function pts(list, fx, fy) {
    var r = [];
    for (var i = 0; i < list.length; i += 2) r.push(fx(list[i]).toFixed(1) + ',' + fy(list[i + 1]).toFixed(1));
    return r;
  }
  function fz11x(x) { return 200 + x / 0.9224; }
  function fz11y(y) { return 1040 + y / 3; }
  function ov(v) { return v * 2.4656; }
  function ovy(v) { return v * 2.4666; }
  function fz6x(x) { return 3000 + x / 1.96; }
  function fz6y(y) { return 900 + y / 2.376; }
  function fz4x(x) { return 60 + x / 1.568; }
  function fz4y(y) { return 1560 + y / 2.266; }
  function fz5x(x) { return 2866 + x / 1.568; }
  function poly(parts, cls) { out.push('<polyline class="line ' + cls + '" points="' + parts.join(' ') + '"/>'); }

  poly(pts([32,458,48,455,64,455,80,460,96,450,112,435,128,398,144,378,160,352,176,330,192,314,208,318,224,316,240,319,256,319,272,319,288,308,304,298,320,301,336,298,352,307,368,303,384,324,400,330,416,351,432,348,448,351,464,348,480,346,496,327,512,297,528,287,544,285,560,268,576,243,592,224,608,205,624,183,640,147,656,114,672,85,688,85,704,72,720,85,736,100,752,106,768,118,784,133,800,130,816,100,832,78,848,67,864,55,880,50,896,50,912,95,928,117,944,118,960,152,976,152,992,147,1008,150,1024,152,1040,190,1056,202,1072,202,1088,203,1104,203,1120,165,1136,145,1152,140,1168,153,1184,168,1200,165,1216,180,1232,163,1248,170,1264,197,1280,208,1296,240,1312,272,1328,298,1344,303,1360,345,1376,375,1392,402,1408,410,1424,418,1440,420,1456,420,1472,410,1488,395,1504,375,1520,370,1536,370,1552,375,1568,430], fz11x, fz11y)
    .concat(pts([770,479,790,478,810,479,830,478,860,475,880,478,900,480,920,478,945,470,960,467,975,470,1000,472,1020,468,1045,460,1070,466,1090,470,1110,467,1150,463,1190,463,1210,465], ov, ovy))
    .concat(pts([0,598,50,602,120,602,150,606,210,605,250,585,320,580,390,593,460,593,490,580,525,590,560,580,625,595,660,598,695,595,765,633,830,637,900,620,970,625,1030,637,1065,635,1100,643,1170,652], fz6x, fz6y)), 'blue');

  var stochRed = pts([32,980,48,1065,64,1140,80,1205,96,1225,112,1240,128,1250,144,1270,160,1292,176,1310,192,1317,208,1310,224,1296,240,1285,256,1283,272,1283,288,1283,304,1265,320,1235,336,1190,352,1135,368,1105,384,1085,400,1045,416,1045,432,1072,448,1072,464,1040,480,1015,496,990,512,1003,528,1017,544,1015,560,1005,576,990,592,968,608,945,624,930,640,915,656,950,672,1020,688,1090,704,1155,720,1195,736,1235,752,1275,768,1305,784,1325,800,1340,816,1355,832,1367,848,1378,864,1360,880,1342,896,1322,912,1305,928,1305,944,1295,960,1250,976,1210,992,1180,1008,1120,1024,1065,1040,1038,1056,1037,1072,1065,1088,1100,1104,1160,1120,1220,1136,1245,1152,1255,1168,1230,1184,1205,1200,1185,1216,1175,1232,1110,1248,1040,1264,1000,1280,985,1296,975,1312,980,1328,1005,1344,1040,1360,1070,1376,1100,1392,1130,1408,1135,1424,1135,1440,1135,1456,1130,1472,1110,1488,1095,1504,1090,1520,1100,1536,1060,1552,1030,1568,970], fz11x, fz11y)
    .concat(pts([770,542,785,540,800,543,825,538,850,545,880,548,900,550,915,565,935,590,950,600,970,605,985,605,1010,600,1040,602,1065,595,1090,583,1110,592,1140,597,1165,606,1180,590,1205,555], ov, ovy))
    .concat(pts([0,1103,50,1097,85,1105,120,1135,150,1150,185,1180,255,1265,290,1290,322,1300,355,1275,388,1225,455,1145,490,1097,525,1075,560,1070,595,1050,660,1005,695,1005,730,995,765,997,830,1017,865,1020,900,1010,970,1002,1000,992,1035,997,1100,985,1135,987,1170,1000,1205,995], fz6x, fz6y));
  poly(stochRed, 'red');

  var stochBlue = pts([32,1120,48,1220,64,1285,80,1312,96,1268,112,1285,128,1270,144,1300,160,1330,176,1340,192,1320,208,1310,224,1256,240,1268,256,1292,272,1275,288,1285,304,1235,320,1190,336,1100,352,1065,368,1050,384,1030,400,955,416,1045,432,1130,448,1060,464,982,480,960,496,928,512,1020,528,1060,544,992,560,990,576,978,592,945,608,905,624,887,640,890,656,1000,672,1120,688,1245,704,1265,720,1285,736,1297,752,1345,768,1368,784,1358,800,1362,816,1388,832,1385,848,1397,864,1340,880,1315,896,1290,912,1263,928,1307,944,1300,960,1160,976,1127,992,1127,1008,1040,1024,945,1040,990,1056,1015,1072,1090,1088,1160,1104,1250,1120,1322,1136,1326,1152,1265,1168,1210,1184,1142,1200,1145,1216,1150,1232,1030,1248,920,1264,920,1280,948,1296,945,1312,985,1328,1030,1344,1100,1360,1107,1376,1150,1392,1178,1408,1160,1424,1137,1440,1137,1456,1130,1472,1085,1488,1067,1504,1067,1520,1125,1536,1050,1552,950,1568,860], fz11x, fz11y)
    .concat(pts([780,533,790,532,800,545,815,540,825,535,840,545,855,548,870,545,885,547,905,553,920,585,935,600,960,612,985,604,1000,600,1030,602,1060,598,1085,575,1105,598,1135,597,1150,607,1165,612,1180,578,1205,541], ov, ovy))
    .concat(pts([0,1070,15,1085,50,1090,120,1180,150,1190,220,1300,255,1335,285,1340,320,1327,388,1135,420,1117,490,1010,560,1057,625,973,660,970,695,995,730,980,765,1005,830,1032,865,1025,900,995,970,990,1000,978,1035,1000,1100,978,1135,985,1170,1023,1205,992], fz6x, fz6y));
  poly(stochBlue, 'blue');

  poly(pts([274,250,301,310,328,300,355,310,382,232,410,280,437,257,464,292,491,410,519,416,546,372,573,328,600,283,628,325,655,347,682,305,709,327,736,252,764,263,791,208,818,247,845,251,872,242,899,185,926,282,953,293,981,202,1008,175,1035,200,1062,188,1089,267,1116,250,1144,180,1171,209,1198,205,1225,175,1252,170,1280,170,1307,178,1334,262,1361,305,1388,383,1415,428,1442,436,1470,437,1497,457,1524,458,1552,378], fz4x, fz4y)
    .concat(pts([430,700,440,695,450,697,458,706,468,693,478,693,490,703,503,680,512,673,522,679,532,665,545,672,556,672,566,690,580,705,590,690,600,672,610,680,625,652,635,660,645,668,655,672,665,680,675,675,685,680,695,672,705,668,715,677,725,668,735,670,750,665,765,648,775,645,785,652,795,660,805,670,815,652,825,640,835,648,845,652,855,650,865,645,875,660,885,655,895,653,905,650,920,670,935,690,950,697,965,680,985,690,1005,690,1030,695,1045,688,1060,685,1075,690,1090,690,1105,702,1120,695,1135,693,1150,700,1160,713], ov, ovy))
    .concat(pts([5,428,33,252,60,208,87,238,114,217,142,122,169,96,196,165,223,203,251,183,278,230,305,230,332,202,359,238,387,256,414,297,441,272,468,250,495,150,522,122,549,178,576,122,604,85,631,153,658,180,685,45,712,20,740,14,767,60,794,32,821,100,849,103,876,103,903,87,930,28,958,25,985,5,1012,2,1039,70,1066,45,1093,25,1120,62,1147,116,1175,40], fz5x, fz4y)), 'blue');

  poly(pts([473,938,491,905,519,903,546,900,573,899,600,895,628,890,655,894,682,895,709,895,736,887,764,940,791,937,818,933,845,933,872,937,899,942,926,925,953,925,981,915,1008,919,1035,920,1062,925,1089,917,1116,913,1144,908,1171,908,1198,930,1225,930,1252,941,1280,941,1307,945,1334,938,1361,950,1388,930,1415,930,1442,930,1470,930,1497,935,1524,938,1552,920], fz4x, fz4y)
    .concat(pts([445,798,470,797,490,795,510,793,530,794,545,792,570,788,590,786,610,785,620,768,630,763,645,767,665,764,690,763,700,775,720,775,745,785,760,780,775,778,790,775,815,770,845,772,870,770,885,768,905,778,925,776,945,778,965,780,985,775,1000,772,1015,770,1030,785,1045,790,1060,791,1085,792,1100,785,1120,782,1145,783,1160,782], ov, ovy))
    .concat(pts([5,820,33,718,60,713,87,713,114,713,142,672,169,672,196,665,223,655,251,718,278,693,305,757,332,760,359,756,387,756,414,824,441,840,468,853,495,790,522,786,549,790,576,765,604,755,631,743,658,743,685,583,712,583,740,583,767,574,794,570,821,563,849,567,876,567,903,587,930,584,958,748,985,756,1012,756,1039,753,1066,765,1093,803,1120,795,1147,777,1175,728], fz5x, fz4y)), 'blue');

  /* ---- frame, axis ticks, separators ---- */
  var tk = '';
  PANES.forEach(function (p) {
    var majors = p.dense.concat(p.sparse);
    var n = Math.ceil((p.ref - p.top) / p.sub);
    for (var y = p.ref - n * p.sub; y < p.bot; y += p.sub) {
      var big = majors.some(function (m) { return Math.abs(m - y) < p.sub / 2.5; });
      var w = big ? 8 : 4;
      tk += 'M234 ' + y.toFixed(1) + 'h' + w + 'M3663 ' + y.toFixed(1) + 'h-' + w;
    }
  });
  out.push('<path d="' + tk + '" stroke="#222" stroke-width="2" fill="none"/>');
  rect(233, 280, 2.5, 1724, 'sep');
  rect(3662, 280, 2, 1725, 'sep');
  rect(233, 280, 3431, 2, 'sep');
  rect(233, 1031, 3431, 4, 'sep');
  rect(233, 1282, 3431, 4, 'sep');
  rect(233, 1532, 3431, 4, 'sep');
  rect(233, 1784, 3431, 4, 'sep');
  rect(233, 2003, 3431, 2, 'sep');

  /* ---- date axis ---- */
  var ax = '';
  DATES.forEach(function (dt) {
    var x = bx(dt[0]);
    ax += 'M' + x.toFixed(1) + ' 2005V2034';
    cells(dt[1], x + 2, 2028);
  });
  out.push('<path d="' + ax + '" stroke="#222" stroke-width="2" fill="none"/>');
  MONTHS.forEach(function (m) { cells(m[1], bx(m[0]) + 4, 1999); });
  out.push('<rect class="box" x="234" y="2001" width="38" height="35"/>');

  /* ---- quote box with the last candle ---- */
  rect(235, 283, 167, 117, 'plotbg');
  out.push('<rect class="body gfill" x="394" y="286" width="7" height="110"/>');
  rect(395, 287, 5, 10, 'rfill');
  out.push('<polygon class="marker" points="391,371 391,384 399,377"/>');
  cells('O=   2.527', 236, 300, '', 15);
  cells('H=   2.711', 236, 324, '', 15);
  cells('L=   2.491', 236, 348, '', 15);
  cells('L=   2.692', 236, 372, '', 15);
  cells('\u0394=  +0.118', 236, 397, '', 15);

  /* ---- readout boxes ---- */
  out.push('<rect class="box" x="234" y="906" width="159" height="126"/>');
  ['27 Aug 20', 'O=   2.527', 'H=   2.711', 'L=   2.491', 'C=   2.692'].forEach(function (s, i) {
    cells(s, 236, [927, 951, 975, 999, 1023][i], '', 15.2);
  });
  out.push('<rect class="box" x="234" y="1230" width="205" height="53"/>');
  cells('Vol=', 236, 1250);
  cellsR('179173', 437, 1250);
  cells('OI=', 236, 1274);
  out.push('<rect class="box" x="234" y="1481" width="189" height="52"/>');
  cells('SSK=', 236, 1502);
  cellsR('84.31', 420, 1502);
  cells('SSD=', 236, 1526);
  cellsR('83.41', 420, 1526);
  out.push('<rect class="box" x="234" y="1755" width="190" height="30"/>');
  cells('RSI=', 236, 1776);
  cellsR('73.15', 421, 1776);
  out.push('<rect class="box" x="234" y="1974" width="205" height="30"/>');
  cells('HVOL=', 236, 1996);
  cellsR('49.68', 437, 1996);

  cells('Commodity Exchange Vol & Commodity OI', 242, 1059, '', 15.3);
  cells('SStoch', 242, 1310, '', 15.3);
  cells('RSI', 242, 1561, '', 15.3);
  cells('HVol', 242, 1812, '', 15.3);

  /* ---- right axis ---- */
  [['2.600', 388], ['2.400', 527], ['2.200', 666], ['2.000', 804], ['1.800', 944], ['1400000', 1115]].forEach(function (a) { cellsR(a[0], 3775, a[1]); });
  [['75', 1345], ['50', 1407], ['25', 1468], ['0', 1530], ['50', 1656], ['25', 1736], ['75', 1825], ['25', 1951]].forEach(function (a) { cellsR(a[0], 3729, a[1]); });
  function chip(txt, y, h, base, cls) { rect(3664.5, y, 113, h, cls); cellsR(txt, 3775, base, 'chip'); }
  chip('2.692', 304, 28, 324, 'chipk');
  chip('1224392', 1160, 27, 1180, 'chipb');
  chip('179173', 1245, 27.5, 1265, 'chipk');
  chip('84.31', 1302, 29, 1322, 'chipb');
  rect(3664.5, 1329, 113, 2, 'chipr');
  chip('73.15', 1562, 28, 1582, 'chipb');
  chip('49.68', 1868, 26.5, 1888, 'chipb');

  /* ---- watermark ---- */
  out.push('<text class="wm1" x="3182" y="1936" textLength="301" lengthAdjust="spacingAndGlyphs">Activate Windows</text>');
  out.push('<text class="wm2" x="3180" y="1977" textLength="438" lengthAdjust="spacingAndGlyphs">Go to Settings to activate Windows.</text>');

  document.getElementById('chart').innerHTML = out.join('');
})();
```
